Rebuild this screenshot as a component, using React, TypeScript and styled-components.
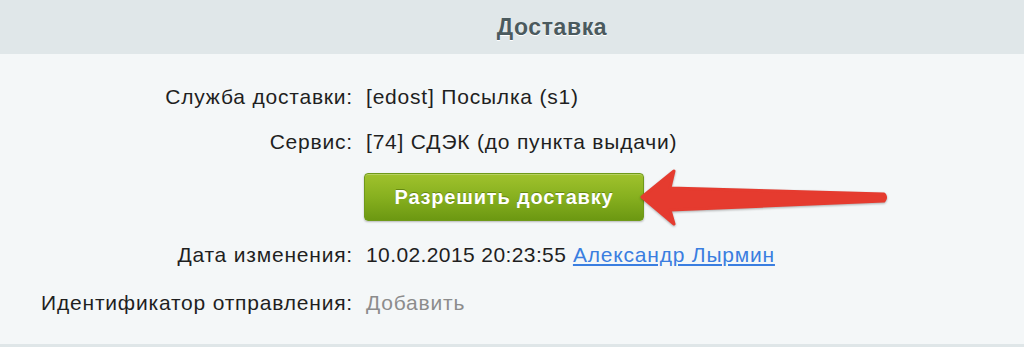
import React from "react";
import styled, { createGlobalStyle } from "styled-components";

const GlobalStyle = createGlobalStyle`
  html, body {
    margin: 0;
    padding: 0;
    background: #f4f7f8;
  }
  body {
    font-family: "Liberation Sans", Arial, sans-serif;
  }
`;

const Panel = styled.section`
  width: 1024px;
  height: 347px;
  box-sizing: border-box;
  background: #f4f7f8;
  border-bottom: 3px solid #dfe6e8;
  overflow: hidden;
`;

const Header = styled.header`
  height: 54px;
  display: flex;
  align-items: center;
  justify-content: center;
  padding-left: 80px;
  background: #e0e7e9;
`;

const Title = styled.h2`
  margin: 0;
  font-size: 23px;
  font-weight: 700;
  letter-spacing: 0.6px;
  color: #4b5a5e;
  text-shadow: 0 1px 0 #ffffff;
`;

const Fields = styled.div`
  display: grid;
  grid-template-columns: 352px 1fr;
  column-gap: 14px;
  row-gap: 23px;
  padding-top: 32px;
  font-size: 21px;
  letter-spacing: 0.8px;
  line-height: 22px;
  color: #1f1f1f;
`;

const Label = styled.div`
  text-align: right;
  align-self: center;
  margin-right: -1px;
`;

const Value = styled.div<{ $muted?: boolean }>`
  align-self: center;
  color: ${(p) => (p.$muted ? "#8c8c8c" : "#1f1f1f")};
`;

const LastLabel = styled(Label)`
  margin-top: 3px;
`;

const LastValue = styled(Value)`
  margin-top: 3px;
`;

const Stamp = styled.span`
  letter-spacing: 0.4px;
`;

const Link = styled.a`
  color: #3a7ee0;
  text-decoration: underline;
  text-underline-offset: 2px;
  cursor: pointer;
`;

const ActionCell = styled.div`
  grid-column: 2;
  margin-left: -2px;
  margin-top: -3px;
`;

const ButtonWrap = styled.div`
  position: relative;
  display: inline-block;
`;

const Button = styled.button`
  width: 280px;
  height: 48px;
  border: 1px solid #6f9a1a;
  border-radius: 4px;
  background: linear-gradient(#a0c22d, #87b01f 50%, #6c9812);
  box-shadow: 0 1px 2px rgba(0, 0, 0, 0.25), inset 0 1px 0 rgba(255, 255, 255, 0.25);
  color: #ffffff;
  font-family: "Liberation Sans", Arial, sans-serif;
  font-size: 20px;
  font-weight: 700;
  letter-spacing: 0.8px;
  text-shadow: 0 -1px 0 rgba(60, 90, 0, 0.5);
  cursor: pointer;
`;

const Arrow = styled.svg`
  position: absolute;
  left: calc(100% - 4px);
  top: -5px;
  width: 250px;
  height: 62px;
  overflow: visible;
  filter: drop-shadow(0 1px 1px rgba(0, 0, 0, 0.3));
`;

const rows = [
  { label: "Служба доставки:", value: "[edost] Посылка (s1)" },
  { label: "Сервис:", value: "[74] СДЭК (до пункта выдачи)" },
];

export default function App() {
  return (
    <>
      <GlobalStyle />
      <Panel>
        <Header>
          <Title>Доставка</Title>
        </Header>
        <Fields>
          {rows.map((r) => (
            <React.Fragment key={r.label}>
              <Label>{r.label}</Label>
              <Value>{r.value}</Value>
            </React.Fragment>
          ))}
          <ActionCell>
            <ButtonWrap>
              <Button>Разрешить доставку</Button>
              <Arrow viewBox="0 0 250 62">
                <path
                  d="M2 29 L34 3 L30 20 L244 26 Q247 29.5 244 33 L30 42 L34 56 Z"
                  fill="#e53b2f"
                  stroke="#e53b2f"
                  strokeWidth="3"
                  strokeLinejoin="round"
                />
              </Arrow>
            </ButtonWrap>
          </ActionCell>
          <Label>Дата изменения:</Label>
          <Value>
            <Stamp>10.02.2015 20:23:55</Stamp> <Link>Александр Лырмин</Link>
          </Value>
          <LastLabel>Идентификатор отправления:</LastLabel>
          <LastValue $muted>Добавить</LastValue>
        </Fields>
      </Panel>
    </>
  );
}
